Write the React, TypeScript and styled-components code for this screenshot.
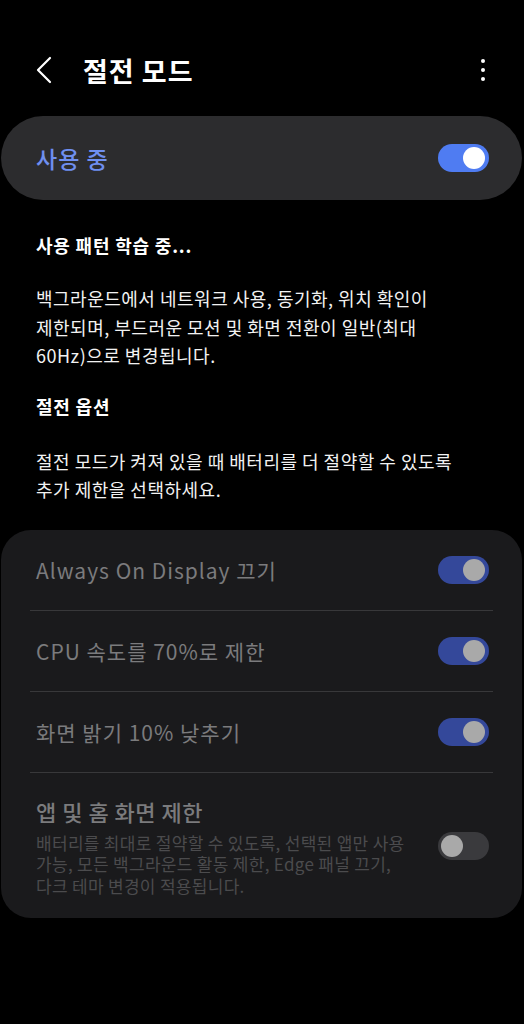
import React from 'react';
import styled, { createGlobalStyle } from 'styled-components';

const GlobalStyle = createGlobalStyle`
  html, body {
    margin: 0;
    padding: 0;
    background: #000;
  }
  body {
    font-family: "Noto Sans CJK KR", "Noto Sans", sans-serif;
    color: #fff;
  }
`;

const Screen = styled.div`
  width: 524px;
  min-height: 1024px;
  background: #000;
  padding-top: 40px;
  box-sizing: border-box;
`;

const Header = styled.div`
  display: flex;
  align-items: center;
  height: 60px;
  padding: 0 39px 0 34px;
`;

const BackButton = styled.div`
  width: 22px;
  height: 30px;
  display: flex;
  align-items: center;
  margin-right: 27px;
`;

const Title = styled.h1`
  flex: 1;
  margin: 0;
  font-size: 27px;
  font-weight: 700;
  letter-spacing: 1px;
  color: #fff;
`;

const Kebab = styled.div`
  display: flex;
  flex-direction: column;
  gap: 5px;
  padding: 4px 0;
`;

const Dot = styled.span`
  width: 4px;
  height: 4px;
  border-radius: 50%;
  background: #fff;
`;

const MasterCard = styled.div`
  margin: 16px 2px 0 1px;
  height: 84px;
  border-radius: 42px;
  background: #2c2c2e;
  display: flex;
  align-items: center;
  justify-content: space-between;
  padding: 0 33px 0 35px;
  box-sizing: border-box;
`;

const MasterLabel = styled.span`
  font-size: 23px;
  font-weight: 500;
  letter-spacing: 1px;
  color: #6f8ff0;
`;

const Switch = styled.div<{ $on: boolean; $dim?: boolean }>`
  position: relative;
  width: 51px;
  height: 28px;
  border-radius: 14px;
  flex-shrink: 0;
  background: ${p => (p.$on ? (p.$dim ? '#34489a' : '#4f7cf2') : '#3a3a3d')};
`;

const Thumb = styled.span<{ $on: boolean; $dim?: boolean }>`
  position: absolute;
  top: 3px;
  left: ${p => (p.$on ? '25px' : '3px')};
  width: 22px;
  height: 22px;
  border-radius: 50%;
  background: ${p => (p.$dim ? '#a9a9a9' : '#fff')};
`;

const Section = styled.div`
  padding: 0 36px;
`;

const Heading = styled.h2<{ $top: number }>`
  margin: ${p => p.$top}px 0 0;
  font-size: 18px;
  font-weight: 700;
  line-height: 28px;
  letter-spacing: 0.8px;
  color: #fff;
`;

const Paragraph = styled.p<{ $top: number }>`
  margin: ${p => p.$top}px 0 0;
  font-size: 18px;
  font-weight: 400;
  line-height: 28.5px;
  color: #f2f2f2;
  letter-spacing: 0.5px;
  white-space: nowrap;
`;

const OptionsCard = styled.div`
  margin: 26px 2px 0 1px;
  border-radius: 30px;
  background: #1a1a1c;
  padding: 0 29px;
`;

const Row = styled.div<{ $last?: boolean }>`
  display: flex;
  align-items: center;
  justify-content: space-between;
  min-height: 81px;
  padding: ${p => (p.$last ? '23px 4px 22px 0' : '0 4px 0 0')};
  box-sizing: border-box;
  border-bottom: ${p => (p.$last ? 'none' : '1px solid #38383a')};
`;

const RowText = styled.div`
  padding-left: 6px;
  padding-right: 20px;
  display: flex;
  flex-direction: column;
`;

const RowTitle = styled.span<{ $strong?: boolean }>`
  font-size: ${p => (p.$strong ? '22px' : '21px')};
  font-weight: ${p => (p.$strong ? 500 : 400)};
  letter-spacing: ${p => (p.$strong ? '0.5px' : '1px')};
  line-height: 30px;
  color: #7b7b7d;
`;

const RowDesc = styled.span`
  margin-top: 6px;
  font-size: 17px;
  line-height: 21.5px;
  color: #4b4b4d;
  letter-spacing: 0.3px;
  white-space: nowrap;
`;

const Toggle: React.FC<{ on: boolean; dim?: boolean }> = ({ on, dim }) => (
  <Switch $on={on} $dim={dim}>
    <Thumb $on={on} $dim={dim} />
  </Switch>
);

const options = [
  'Always On Display 끄기',
  'CPU 속도를 70%로 제한',
  '화면 밝기 10% 낮추기',
];

export default function App() {
  return (
    <>
      <GlobalStyle />
      <Screen>
        <Header>
          <BackButton>
            <svg width="18" height="28" viewBox="0 0 18 28">
              <path d="M16 2 L4 14 L16 26" fill="none" stroke="#fff" strokeWidth="2.2" strokeLinecap="round" strokeLinejoin="round" />
            </svg>
          </BackButton>
          <Title>절전 모드</Title>
          <Kebab>
            <Dot />
            <Dot />
            <Dot />
          </Kebab>
        </Header>

        <MasterCard>
          <MasterLabel>사용 중</MasterLabel>
          <Toggle on />
        </MasterCard>

        <Section>
          <Heading $top={31}>사용 패턴 학습 중...</Heading>
          <Paragraph $top={25}>
            백그라운드에서 네트워크 사용, 동기화, 위치 확인이<br />
            제한되며, 부드러운 모션 및 화면 전환이 일반(최대<br />
            60Hz)으로 변경됩니다.
          </Paragraph>
          <Heading $top={22}>절전 옵션</Heading>
          <Paragraph $top={27}>
            절전 모드가 켜져 있을 때 배터리를 더 절약할 수 있도록<br />
            추가 제한을 선택하세요.
          </Paragraph>
        </Section>

        <OptionsCard>
          {options.map(label => (
            <Row key={label}>
              <RowText>
                <RowTitle>{label}</RowTitle>
              </RowText>
              <Toggle on dim />
            </Row>
          ))}
          <Row $last>
            <RowText>
              <RowTitle $strong>앱 및 홈 화면 제한</RowTitle>
              <RowDesc>
                배터리를 최대로 절약할 수 있도록, 선택된 앱만 사용<br />
                가능, 모든 백그라운드 활동 제한, Edge 패널 끄기,<br />
                다크 테마 변경이 적용됩니다.
              </RowDesc>
            </RowText>
            <Toggle on={false} dim />
          </Row>
        </OptionsCard>
      </Screen>
    </>
  );
}
